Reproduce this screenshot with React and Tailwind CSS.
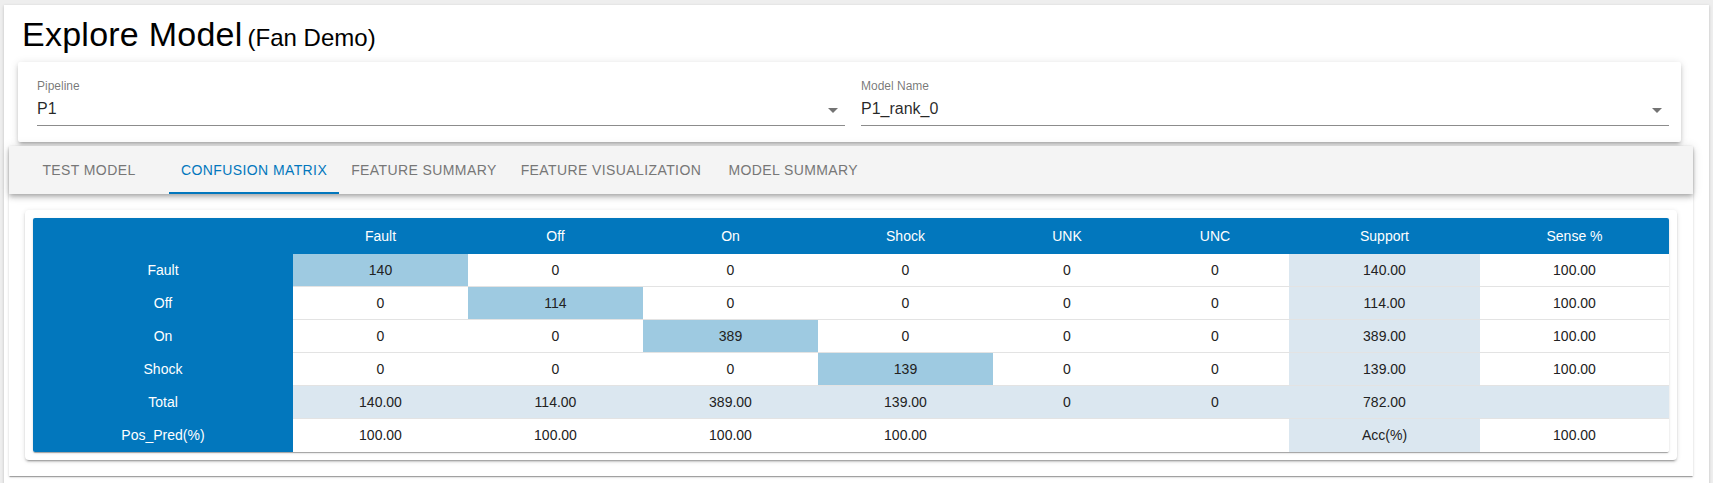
import React from 'react';

const BLUE = 'bg-[#0277bd]';

const columns = ['Fault', 'Off', 'On', 'Shock', 'UNK', 'UNC', 'Support', 'Sense %'];

const rows = [
  { label: 'Fault', cells: ['140', '0', '0', '0', '0', '0'], support: '140.00', sense: '100.00', diag: 0 },
  { label: 'Off', cells: ['0', '114', '0', '0', '0', '0'], support: '114.00', sense: '100.00', diag: 1 },
  { label: 'On', cells: ['0', '0', '389', '0', '0', '0'], support: '389.00', sense: '100.00', diag: 2 },
  { label: 'Shock', cells: ['0', '0', '0', '139', '0', '0'], support: '139.00', sense: '100.00', diag: 3 },
];

const gridCols = 'grid grid-cols-[260px_175px_175px_175px_175px_148px_148px_191px_189px]';

const SelectField = ({ label, value }) => (
  <div className="relative">
    <div className="h-[16px] pt-[1.5px] text-[12px] leading-[12px] text-black/55">{label}</div>
    <div className="h-[32px] pt-[4px] pb-[5px] border-b border-black/45 flex items-center text-[16px] text-black/85">
      {value}
    </div>
    <svg className="absolute right-0 top-[20px] w-6 h-6 text-black/55" viewBox="0 0 24 24" fill="currentColor">
      <path d="M7 10l5 5 5-5z" />
    </svg>
  </div>
);

const Cell = ({ children, bg = 'bg-white', border = true }) => (
  <div className={`${bg} ${border ? 'border-b border-[#e3e3e3]' : ''} h-[33px] flex items-center justify-center text-[14px] text-[#222]`}>
    {children}
  </div>
);

const LabelCell = ({ children }) => (
  <div className={`${BLUE} h-[33px] flex items-center justify-center text-[14px] text-white`}>{children}</div>
);

const App = () => {
  const tabs = ['TEST MODEL', 'CONFUSION MATRIX', 'FEATURE SUMMARY', 'FEATURE VISUALIZATION', 'MODEL SUMMARY'];

  return (
    <div className="min-h-screen bg-[#eeeeee] pt-[5px] px-[4px] font-['Liberation_Sans',Arial,sans-serif] overflow-hidden">
      <div className="bg-white min-h-[490px] pt-[8px] shadow-[0_1px_3px_rgba(0,0,0,0.2)]">
        {/* TITLE */}
        <div className="flex items-baseline gap-[5px] pl-[18px]">
          <h4 className="text-[34px] leading-[42px] tracking-[0.25px] text-black">Explore Model</h4>
          <span className="text-[24px] leading-[32px] text-black">(Fan Demo)</span>
        </div>

        {/* PILIHAN PIPELINE / MODEL */}
        <div className="ml-[14px] mr-[28px] mt-[7px] bg-white rounded-[2px] pt-4 pb-4 pl-[19px] pr-[12px] grid grid-cols-2 gap-4 shadow-[0_3px_3px_-2px_rgba(0,0,0,0.2),0_3px_4px_0_rgba(0,0,0,0.14),0_1px_8px_0_rgba(0,0,0,0.12)]">
          <SelectField label="Pipeline" value="P1" />
          <SelectField label="Model Name" value="P1_rank_0" />
        </div>

        {/* TABS + KONTEN */}
        <div className="ml-[5px] mr-[16px] mt-[4px] bg-white shadow-[0_2px_1px_-1px_rgba(0,0,0,0.2),0_1px_1px_0_rgba(0,0,0,0.14),0_1px_3px_0_rgba(0,0,0,0.12)]">
          <div className="relative z-10 h-[48px] bg-[#f4f4f4] flex shadow-[0_2px_4px_-1px_rgba(0,0,0,0.2),0_4px_5px_0_rgba(0,0,0,0.14),0_1px_10px_0_rgba(0,0,0,0.12)]">
            {tabs.map((t, i) => (
              <div
                key={t}
                className={`relative min-w-[160px] px-3 h-full flex items-center justify-center text-[14px] tracking-[0.4px] ${
                  i === 1 ? 'text-[#0277bd]' : 'text-[#777777]'
                }`}
              >
                {t}
                {i === 1 && <div className="absolute left-0 right-0 bottom-0 h-[2px] bg-[#0277bd]" />}
              </div>
            ))}
          </div>

          <div className="p-4">
            <div className="bg-white p-2 rounded-[4px] shadow-[0_3px_1px_-2px_rgba(0,0,0,0.2),0_2px_2px_0_rgba(0,0,0,0.14),0_1px_5px_0_rgba(0,0,0,0.12)]">
              <div className="rounded-[2px] overflow-hidden shadow-[0_2px_1px_-1px_rgba(0,0,0,0.2),0_1px_1px_0_rgba(0,0,0,0.14),0_1px_3px_0_rgba(0,0,0,0.12)]">
                {/* HEADER */}
                <div className={`${gridCols} ${BLUE} h-[36px]`}>
                  <div />
                  {columns.map((c) => (
                    <div key={c} className="flex items-center justify-center text-[14px] text-white">{c}</div>
                  ))}
                </div>

                {rows.map((r) => (
                  <div key={r.label} className={gridCols}>
                    <LabelCell>{r.label}</LabelCell>
                    {r.cells.map((v, i) => (
                      <Cell key={i} bg={i === r.diag ? 'bg-[#9ecae1]' : 'bg-white'}>{v}</Cell>
                    ))}
                    <Cell bg="bg-[#dbe7f0]">{r.support}</Cell>
                    <Cell>{r.sense}</Cell>
                  </div>
                ))}

                {/* TOTAL */}
                <div className={gridCols}>
                  <LabelCell>Total</LabelCell>
                  {['140.00', '114.00', '389.00', '139.00', '0', '0', '782.00', ''].map((v, i) => (
                    <Cell key={i} bg="bg-[#dbe7f0]">{v}</Cell>
                  ))}
                </div>

                {/* POS PRED */}
                <div className={gridCols}>
                  <LabelCell>Pos_Pred(%)</LabelCell>
                  {['100.00', '100.00', '100.00', '100.00', '', ''].map((v, i) => (
                    <Cell key={i} border={false}>{v}</Cell>
                  ))}
                  <Cell bg="bg-[#dbe7f0]" border={false}>Acc(%)</Cell>
                  <Cell border={false}>100.00</Cell>
                </div>
              </div>
            </div>
          </div>
        </div>
      </div>
    </div>
  );
};

export default App;
